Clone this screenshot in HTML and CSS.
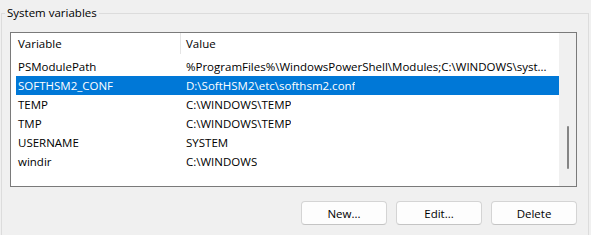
FILE: index.html
```html
<!DOCTYPE html>
<html>
<head>
<meta charset="utf-8">
<link rel="stylesheet" href="styles.css">
</head>
<body>
<fieldset class="group">
  <legend class="group-title">System variables</legend>
  <div class="list">
    <div class="table">
      <div class="head">
        <div class="hcell hcell-var">Variable</div>
        <div class="hcell hcell-val">Value</div>
      </div>
      <div class="row"><div class="c1">PSModulePath</div><div class="c2">%ProgramFiles%\WindowsPowerShell\Modules;C:\WINDOWS\syst...</div></div>
      <div class="row selected"><div class="c1">SOFTHSM2_CONF</div><div class="c2">D:\SoftHSM2\etc\softhsm2.conf</div></div>
      <div class="row"><div class="c1">TEMP</div><div class="c2">C:\WINDOWS\TEMP</div></div>
      <div class="row"><div class="c1">TMP</div><div class="c2">C:\WINDOWS\TEMP</div></div>
      <div class="row"><div class="c1">USERNAME</div><div class="c2">SYSTEM</div></div>
      <div class="row"><div class="c1">windir</div><div class="c2">C:\WINDOWS</div></div>
    </div>
    <div class="scroll"><div class="thumb"></div></div>
  </div>
  <div class="buttons">
    <button class="btn">New...</button>
    <button class="btn">Edit...</button>
    <button class="btn">Delete</button>
  </div>
</fieldset>
</body>
</html>
```
FILE: styles.css
```css
html, body {
  margin: 0;
  padding: 0;
  height: 235px;
  overflow: hidden;
  background: #f0f0f0;
}
body {
  font-family: "Open Sans", "Noto Sans", sans-serif;
  font-size: 11.5px;
  color: #000;
}
.group {
  margin: 5px 2px 0 1px;
  padding: 11px 11px 20px 8px;
  border: 1px solid #dcdcdc;
  min-inline-size: 0;
}
.group-title {
  padding: 0 2px;
  margin-left: -5px;
  line-height: 16px;
  font-size: 11.5px;
}
.list {
  display: flex;
  height: 153px;
  border: 1px solid #7a7a7a;
  background: #fff;
}
.table {
  flex: 1;
  padding-left: 5px;
  min-width: 0;
}
.head {
  display: flex;
  height: 24px;
}
.hcell {
  line-height: 21px;
  height: 21px;
  padding-top: 0;
}
.hcell-var {
  width: 162px;
  padding-left: 2px;
  border-right: 1px solid #e5e5e5;
}
.hcell-val {
  padding-left: 5px;
}
.row {
  display: flex;
  height: 19px;
  line-height: 19px;
  white-space: nowrap;
}
.row .c1 {
  width: 163px;
  padding-left: 2px;
}
.row .c2 {
  padding-left: 5px;
  overflow: hidden;
}
.row.selected {
  background: #0078d7;
  color: #fff;
}
.scroll {
  width: 17px;
  background: #f0f0f0;
  display: flex;
  justify-content: center;
}
.thumb {
  width: 2px;
  height: 43px;
  margin-top: 93px;
  margin-left: 0;
  background: #858585;
  border-radius: 1px;
}
.buttons {
  display: flex;
  justify-content: flex-end;
  gap: 9px;
  margin-top: 14px;
}
.btn {
  width: 86px;
  height: 24px;
  padding: 0;
  font-family: "Open Sans", "Noto Sans", sans-serif;
  font-size: 11.5px;
  color: #000;
  background: #fdfdfd;
  border: 1px solid #d4d4d4;
  border-bottom-color: #c4c4c4;
  border-radius: 4px;
}
```
